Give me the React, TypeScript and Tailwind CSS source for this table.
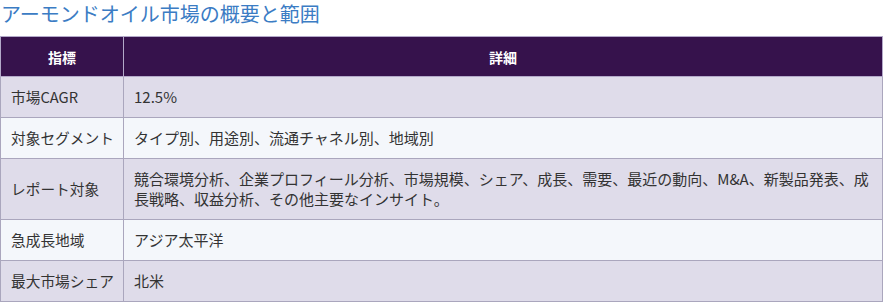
const rows: [string, string][] = [
  ["市場CAGR", "12.5%"],
  ["対象セグメント", "タイプ別、用途別、流通チャネル別、地域別"],
  [
    "レポート対象",
    "競合環境分析、企業プロフィール分析、市場規模、シェア、成長、需要、最近の動向、M&A、新製品発表、成長戦略、収益分析、その他主要なインサイト。",
  ],
  ["急成長地域", "アジア太平洋"],
  ["最大市場シェア", "北米"],
];

export default function App() {
  return (
    <div
      className="w-[889px] h-[304px] bg-white"
      style={{ fontFamily: '"Noto Sans CJK JP", "Noto Sans", sans-serif' }}
    >
      <h2 className="text-[20px] leading-[28px] pl-[1px] text-[#3b7cc4] font-normal h-[36px]">
        アーモンドオイル市場の概要と範囲
      </h2>
      <table className="w-[883px] table-fixed border-collapse leading-[20px] text-[#333]">
        <thead>
          <tr className="bg-[#36124c] text-white">
            <th className="w-[123px] h-[40px] border border-[#b3a9c9] font-bold text-[14px] text-center">
              指標
            </th>
            <th className="border border-[#b3a9c9] font-bold text-[14px] text-center">詳細</th>
          </tr>
        </thead>
        <tbody>
          {rows.map(([k, v], i) => (
            <tr key={k} className={i % 2 === 0 ? "bg-[#dfdcea]" : "bg-[#f4f7fb]"}>
              <td className="border border-[#aaa6bd] pl-[10px] pr-0 py-[10px] text-[14.7px] align-middle whitespace-nowrap">
                {k}
              </td>
              <td className="border border-[#aaa6bd] px-[10px] py-[10px] text-[15px] align-middle">{v}</td>
            </tr>
          ))}
        </tbody>
      </table>
    </div>
  );
}
